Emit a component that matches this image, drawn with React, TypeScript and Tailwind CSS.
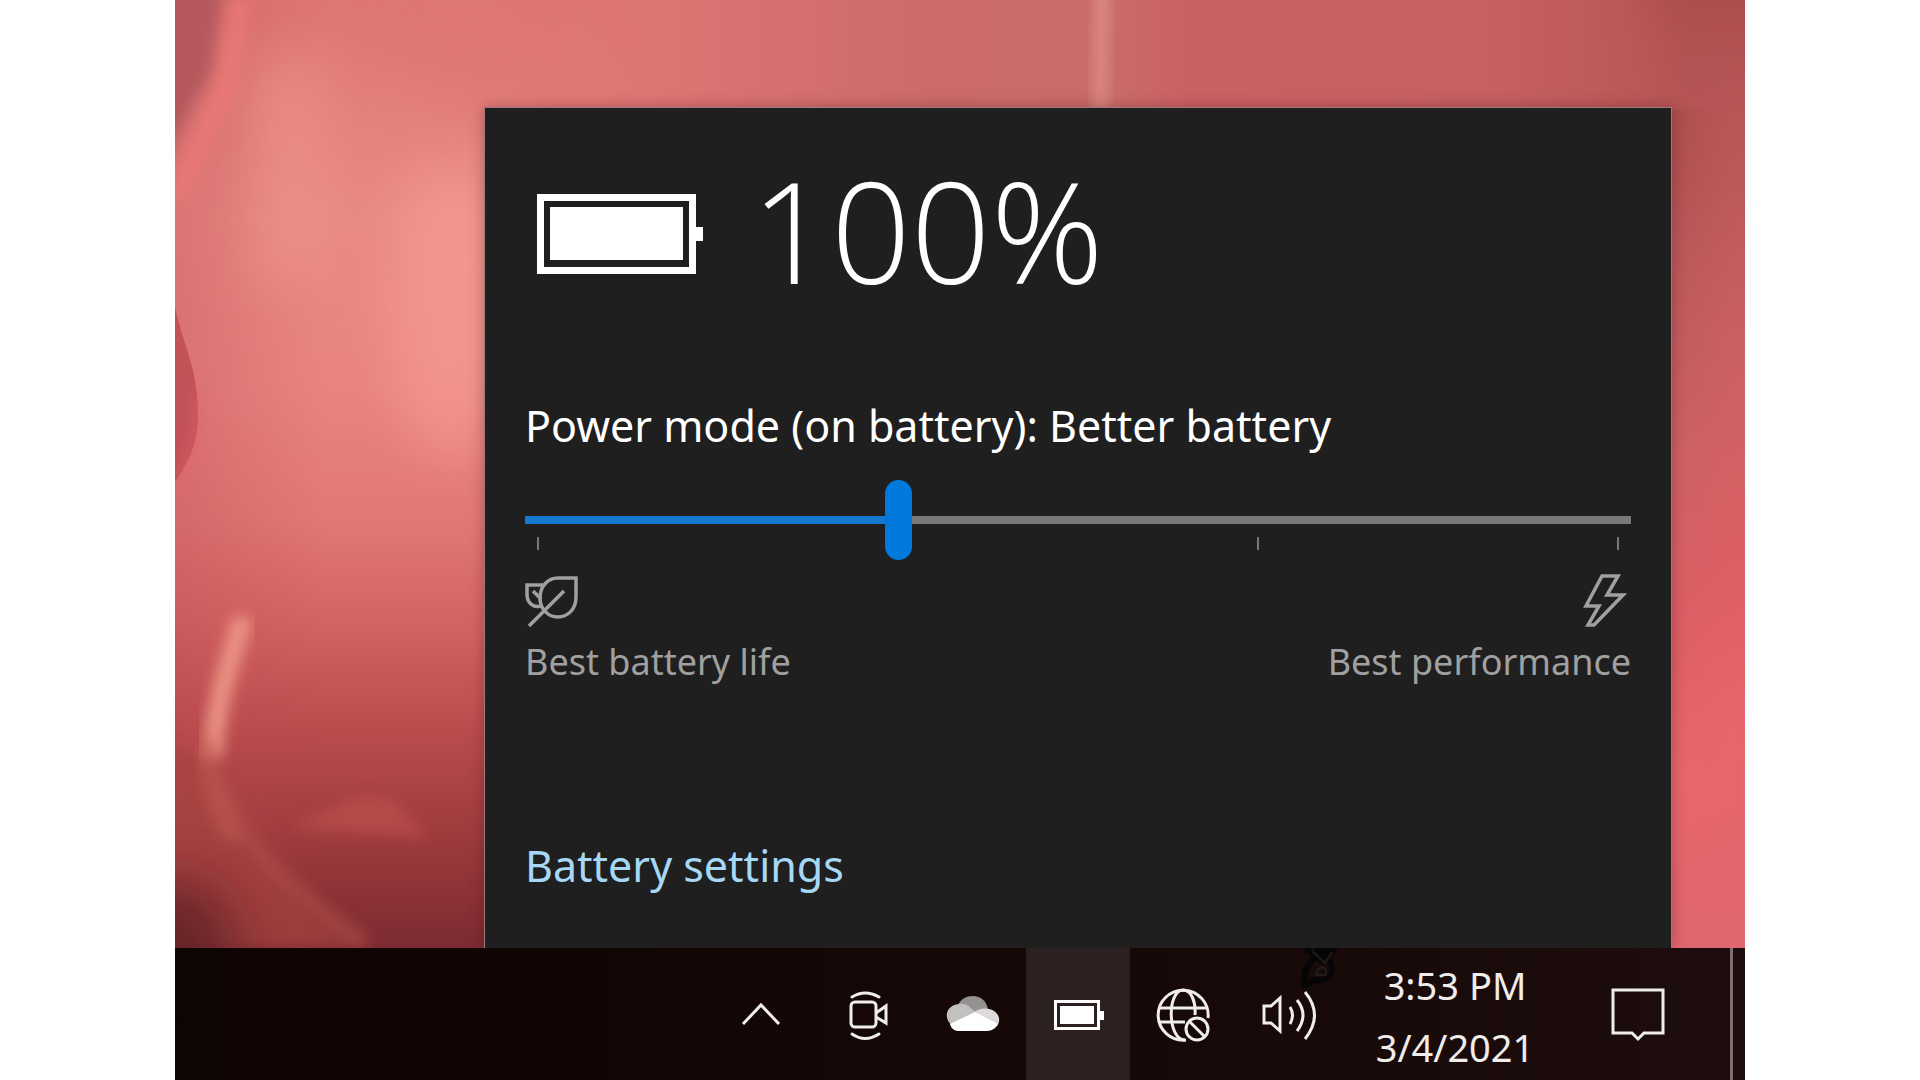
import { useState } from "react";

const MODES = ["Best battery life", "Better battery", "Better performance", "Best performance"];

function Wallpaper() {
  return (
    <svg
      className="absolute inset-0 h-full w-full"
      viewBox="0 0 1570 1080"
      preserveAspectRatio="none"
      aria-hidden="true"
    >
      <defs>
        <linearGradient id="left" x1="0" y1="0" x2="0" y2="1">
          <stop offset="0" stopColor="#de7774" />
          <stop offset="0.2" stopColor="#e88a84" />
          <stop offset="0.36" stopColor="#e88480" />
          <stop offset="0.48" stopColor="#e27875" />
          <stop offset="0.58" stopColor="#d36362" />
          <stop offset="0.68" stopColor="#b94b4c" />
          <stop offset="0.78" stopColor="#9b3a3c" />
          <stop offset="0.88" stopColor="#7b2a32" />
        </linearGradient>
        <linearGradient id="top" x1="0" y1="0" x2="1" y2="0">
          <stop offset="0" stopColor="#de7673" stopOpacity="0" />
          <stop offset="0.16" stopColor="#dc7472" />
          <stop offset="0.36" stopColor="#cb6b69" />
          <stop offset="0.5" stopColor="#c96c6a" />
          <stop offset="0.56" stopColor="#ca6164" />
          <stop offset="0.8" stopColor="#c66062" />
          <stop offset="0.93" stopColor="#b95757" />
          <stop offset="1" stopColor="#a84b4b" />
        </linearGradient>
        <linearGradient id="right" x1="0" y1="0" x2="0" y2="1">
          <stop offset="0" stopColor="#a94b4a" />
          <stop offset="0.14" stopColor="#b85758" />
          <stop offset="0.36" stopColor="#cd6164" />
          <stop offset="0.54" stopColor="#dc5f64" />
          <stop offset="0.68" stopColor="#e8666b" />
          <stop offset="0.88" stopColor="#df666e" />
        </linearGradient>
        <linearGradient id="edge" x1="0" y1="0" x2="1" y2="0">
          <stop offset="0" stopColor="#b84550" stopOpacity="0.3" />
          <stop offset="1" stopColor="#b84550" stopOpacity="0" />
        </linearGradient>
        <filter id="soft" x="-50%" y="-50%" width="200%" height="200%">
          <feGaussianBlur stdDeviation="7" />
        </filter>
        <filter id="softer" x="-80%" y="-80%" width="260%" height="260%">
          <feGaussianBlur stdDeviation="26" />
        </filter>
      </defs>
      <rect width="1570" height="1080" fill="url(#left)" />
      <rect x="300" width="1270" height="130" fill="url(#top)" />
      <path d="M120 0H400V90L300 110L180 40Z" fill="#de7572" opacity="0.6" filter="url(#softer)" />
      <path d="M1496 109H1570V1080H1496Z" fill="url(#right)" />
      <path d="M1460 -40H1620V1080H1530V160Z" fill="url(#right)" filter="url(#softer)" />
      <rect width="150" height="1080" fill="url(#edge)" />
      <ellipse cx="275" cy="310" rx="60" ry="150" fill="#fba498" opacity="0.5" filter="url(#softer)" />
      <path d="M85 60L140 60L135 270L85 290Z" fill="#f6a293" opacity="0.45" filter="url(#softer)" />
      <path d="M66 0L50 90L0 200" fill="none" stroke="#f37c77" strokeWidth="20" opacity="0.6" filter="url(#soft)" />
      <path d="M-20 -20H48L36 70L-20 175Z" fill="#b4585d" filter="url(#soft)" />
      <path d="M0 308C10 350 23 370 23 415C23 445 12 465 0 482Z" fill="#c25158" />
      <path d="M24 390C24 440 14 470 2 490" fill="none" stroke="#e2656a" strokeWidth="5" filter="url(#soft)" />
      <path d="M115 828L180 796L215 797L255 838Z" fill="#bd4f4d" opacity="0.7" filter="url(#soft)" />
      <path
        d="M42 770C35 820 70 870 180 948H-10V740Z"
        fill="#a5443f"
        opacity="0.7"
        filter="url(#soft)"
      />
      <path d="M45 780C65 850 110 885 190 945" fill="none" stroke="#b0504a" strokeWidth="18" opacity="0.65" filter="url(#soft)" />
      <path d="M66 625C52 670 42 700 38 750" fill="none" stroke="#f09a89" strokeWidth="20" strokeLinecap="round" opacity="0.9" filter="url(#soft)" />
      <path d="M34 740C30 780 45 810 60 840" fill="none" stroke="#bd5a52" strokeWidth="20" opacity="0.6" filter="url(#soft)" />
      <ellipse cx="0" cy="950" rx="60" ry="70" fill="#5c1d24" opacity="0.8" filter="url(#softer)" />
      <path d="M921 -20H933L930 130H920Z" fill="#e59a8b" opacity="0.85" filter="url(#soft)" />
    </svg>
  );
}

function BatteryIcon() {
  return (
    <svg className="h-20 w-[166px] shrink-0" viewBox="0 0 166 80" aria-hidden="true">
      <rect x="3.5" y="3.5" width="152" height="73" fill="none" stroke="#fff" strokeWidth="7" />
      <rect x="13" y="13" width="133" height="53" fill="#fff" />
      <rect x="159" y="33" width="7" height="14" fill="#fff" />
    </svg>
  );
}

function LeafIcon() {
  return (
    <svg className="h-14 w-14" viewBox="0 0 56 56" fill="none" stroke="#a0a0a0" strokeWidth="3.5" aria-hidden="true">
      <path d="M33 6H51V25C51 38 42 45 33 45C23 45 15 37 15 26C15 14 23 6 33 6Z" />
      <path d="M18 13H2V22C2 31 8 36 16 34" />
      <path d="M4 54L39 19" />
      <path d="M8 19L16 27" />
    </svg>
  );
}

function BoltIcon() {
  return (
    <svg className="mr-1 h-14 w-11" viewBox="0 0 44 56" fill="none" stroke="#a0a0a0" strokeWidth="3.5" aria-hidden="true">
      <path d="M19 4H35L24 23H40L11 53H5L16 34H3Z" />
    </svg>
  );
}

function ChevronIcon() {
  return (
    <svg className="h-14 w-14" viewBox="0 0 56 56" fill="none" stroke="#f0eded" strokeWidth="3" aria-hidden="true">
      <path d="M5 38L23 19L41 38" />
    </svg>
  );
}

function MeetIcon() {
  return (
    <svg className="h-14 w-14" viewBox="0 0 56 56" fill="none" stroke="#f0eded" strokeWidth="3" aria-hidden="true">
      <rect x="9" y="16" width="25" height="25" rx="4" />
      <path d="M34 27L44 20V37L34 31" />
      <path d="M10 11Q23 3 37 11M10 48Q23 57 37 48" strokeLinecap="round" />
    </svg>
  );
}

function CloudIcon() {
  return (
    <svg className="h-14 w-14" viewBox="0 0 56 56" aria-hidden="true">
      <path d="M12 19C15 13 20 10 27 10C35 10 40 15 42 23L28 30L12 24Z" fill="#949191" />
      <path d="M13 18C18 17 22 19 27 24L33 29L7 40C-3 34 -1 19 13 18Z" fill="#c3c0c0" />
      <path d="M27 27C33 22 39 22 43 23C52 25 56 33 51 40Z" fill="#dcdada" />
      <path d="M4 38L29 26L52 38C50 42 46 45 41 45H12C8 45 5 42 4 38Z" fill="#fff" />
    </svg>
  );
}

function TrayBatteryIcon() {
  return (
    <svg className="h-14 w-14" viewBox="0 0 56 56" aria-hidden="true">
      <rect x="5.5" y="15.5" width="43" height="27" fill="none" stroke="#fff" strokeWidth="3" />
      <rect x="10" y="20" width="34" height="18" fill="#fff" />
      <rect x="50" y="25" width="4" height="9" fill="#fff" />
    </svg>
  );
}

function GlobeIcon() {
  return (
    <svg className="h-14 w-14" viewBox="0 0 56 56" fill="none" stroke="#f0eded" strokeWidth="3" aria-hidden="true">
      <path d="M54 32A25 25 0 1 0 32 54" />
      <path d="M31 54C13 54 13 4 29 4C37 4 42 15 41 29" />
      <path d="M6 22H52M6 36H31" />
      <circle cx="43" cy="43" r="11" />
      <path d="M35 35L51 51" />
    </svg>
  );
}

function VolumeIcon() {
  return (
    <svg className="h-14 w-14 overflow-visible" viewBox="0 0 56 56" fill="none" stroke="#f0eded" strokeWidth="3" aria-hidden="true">
      <path d="M6 20H13L22 12V45L13 37H6Z" />
      <path d="M32 21Q37 29 32 38M39 14Q51 29 39 45M47 6Q66 29 47 53" />
    </svg>
  );
}

function NotificationIcon() {
  return (
    <svg className="h-14 w-14" viewBox="0 0 56 56" fill="none" stroke="#f0eded" strokeWidth="3" aria-hidden="true">
      <path d="M3 4H53V47H34L28 53L22 47H3Z" />
    </svg>
  );
}

// dark scribble that hangs from the top edge of the taskbar
function Scribble() {
  return (
    <svg className="absolute top-0 left-[66px] h-10 w-10" viewBox="0 0 40 40" fill="none" stroke="#060505" strokeWidth="6" aria-hidden="true">
      <path d="M6 0L20 12L36 0M16 0L30 14C36 26 26 34 14 32L4 39L5 24C8 12 20 8 28 0" />
      <path d="M16 27C17 17 28 17 26 27Z" stroke="#1f1d1d" strokeWidth="2" />
      <path d="M12 3L25 15L32 4" stroke="#1f1d1d" strokeWidth="2" />
    </svg>
  );
}

const TRAY = [
  { label: "Show hidden icons", Icon: ChevronIcon },
  { label: "Meet Now", Icon: MeetIcon },
  { label: "OneDrive", Icon: CloudIcon },
  { label: "Battery", Icon: TrayBatteryIcon, active: true },
  { label: "Network", Icon: GlobeIcon },
  { label: "Volume", Icon: VolumeIcon, scribble: true },
];

function PowerSlider() {
  const [mode, setMode] = useState(1);
  // keeps the blue part of the track under the middle of the 27px thumb
  const fill = `calc(14px + (100% - 27px) * ${mode / 3})`;

  return (
    <>
      <label htmlFor="power" className="mt-20 block text-[43px] leading-[64px] whitespace-nowrap text-white">
        Power mode (on battery): {MODES[mode]}
      </label>
      <div className="mt-[22px] grid">
        <div className="col-start-1 row-start-1 mb-[10px] flex items-end justify-between px-3">
          {MODES.map((m) => (
            <span key={m} className="h-[13px] w-[2px] bg-[#777]" />
          ))}
        </div>
        <input
          id="power"
          type="range"
          min={0}
          max={3}
          value={mode}
          onChange={(e) => setMode(Number(e.target.value))}
          style={{ backgroundImage: `linear-gradient(to right, #1478d0 ${fill}, #7a7a7a ${fill})` }}
          className="relative col-start-1 row-start-1 h-20 w-full cursor-pointer appearance-none bg-[length:100%_8px] bg-center bg-no-repeat outline-none [&::-webkit-slider-thumb]:h-20 [&::-webkit-slider-thumb]:w-[27px] [&::-webkit-slider-thumb]:appearance-none [&::-webkit-slider-thumb]:rounded-full [&::-webkit-slider-thumb]:bg-[#0078dc]"
        />
      </div>
      <div className="mt-3 flex justify-between text-[36px] leading-[52px] text-[#a0a0a0]">
        <div className="flex flex-col items-start gap-2">
          <LeafIcon />
          <span>{MODES[0]}</span>
        </div>
        <div className="flex flex-col items-end gap-2">
          <BoltIcon />
          <span>{MODES[3]}</span>
        </div>
      </div>
    </>
  );
}

function Taskbar() {
  return (
    <footer className="relative flex h-[132px] shrink-0 justify-end bg-gradient-to-r from-[#0e0402] to-[#1d0d0e] text-[38px] text-[#f0eded]">
      {TRAY.map(({ label, Icon, active, scribble }) => (
        <button
          key={label}
          aria-label={label}
          className={`relative flex w-[104px] items-center justify-center ${active ? "bg-[#2d2021]" : ""}`}
        >
          <Icon />
          {scribble && <Scribble />}
        </button>
      ))}
      <button className="w-[234px] pt-1 text-center leading-[62px]">
        <span className="block">3:53 PM</span>
        <span className="block">3/4/2021</span>
      </button>
      <button aria-label="Notifications" className="flex w-[132px] items-center justify-center">
        <NotificationIcon />
      </button>
      <button aria-label="Show desktop" className="ml-[26px] w-[15px] border-l-[3px] border-[#7d7071]" />
    </footer>
  );
}

export default function App() {
  return (
    <div className="min-h-screen bg-white px-[175px] font-['Noto_Sans','Open_Sans',sans-serif]">
      <main className="relative flex min-h-screen flex-col overflow-hidden">
        <Wallpaper />
        <section className="relative mt-[108px] mr-[74px] ml-[310px] flex flex-1 flex-col bg-[#1f1f1f] px-10 pt-[46px] pb-[50px] shadow-[0_0_14px_rgba(60,10,20,0.35)] ring-1 ring-[#a07a7a]">
          <div className="flex h-40 items-center gap-12 pl-3">
            <BatteryIcon />
            <h1 className="pb-2 font-['Open_Sans','Noto_Sans',sans-serif] text-[140px] leading-none font-light text-white">
              100%
            </h1>
          </div>
          <PowerSlider />
          <a href="#battery-settings" className="mt-auto self-start text-[43px] leading-[64px] text-[#a6d8f5]">
            Battery settings
          </a>
        </section>
        <Taskbar />
      </main>
    </div>
  );
}
